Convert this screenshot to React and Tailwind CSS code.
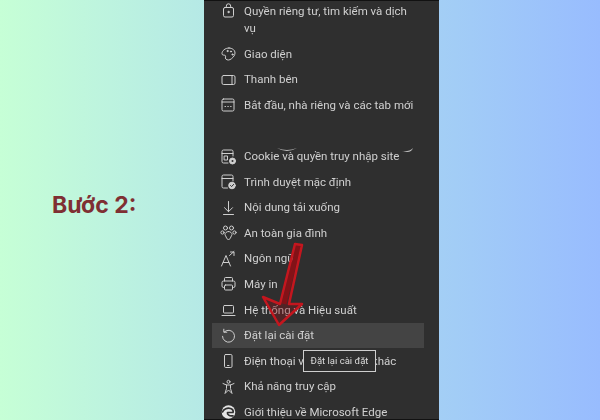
const Ic = ({ children }) => (
  <svg width="18" height="18" viewBox="0 0 18 18" fill="none" stroke="#cfcfcf" strokeWidth="1" strokeLinecap="round" strokeLinejoin="round">
    {children}
  </svg>
);

const items = [
  {
    label: "Quyền riêng tư, tìm kiếm và dịch vụ",
    icon: (
      <>
        <rect x="4.500" y="5.500" width="10" height="9.500" rx="1.500" />
        <path d="M7.300 5.500V4a2.200 2.200 0 0 1 4.400 0v1.500" />
        <circle cx="9.500" cy="10" r="0.700" fill="#cfcfcf" />
      </>
    ),
  },
  {
    label: "Giao diện",
    icon: (
      <>
        <path d="M10 3C6 3 3 5.800 3 8.600c0 2 2.300 1.200 3.200 1.800 1.200.8-.6 2.400.6 3.600 1.500 1.500 3.800 1.200 5.600-.2C14.600 12 16 10 16 8c0-2.800-2.500-5-6-5z" />
        <circle cx="8.500" cy="6" r="0.600" fill="#cfcfcf" />
        <circle cx="12" cy="6.500" r="0.600" fill="#cfcfcf" />
        <circle cx="13.500" cy="9.500" r="0.600" fill="#cfcfcf" />
      </>
    ),
  },
  {
    label: "Thanh bên",
    icon: (
      <>
        <rect x="3" y="4.500" width="13" height="9" rx="1.500" />
        <path d="M13 4.500v9" />
      </>
    ),
  },
  {
    label: "Bắt đầu, nhà riêng và các tab mới",
    gapAfter: true,
    icon: (
      <>
        <rect x="3" y="3" width="12" height="12" rx="1.500" />
        <path d="M3 6h12M6 10.500h.5M8.800 10.500h.5M11.600 10.500h.5" />
      </>
    ),
  },
  {
    label: "Cookie và quyền truy nhập site",
    icon: (
      <>
        <path d="M9 15H4.500A1.500 1.500 0 0 1 3 13.500v-10A1.500 1.500 0 0 1 4.500 2h8A1.500 1.500 0 0 1 14 3.500V8" />
        <path d="M3 5.500h11" />
        <rect x="5.500" y="8" width="3" height="4" />
        <circle cx="13.500" cy="13" r="3" fill="#cfcfcf" />
        <circle cx="13.500" cy="13" r="1" fill="#2f2f2f" stroke="none" />
      </>
    ),
  },
  {
    label: "Trình duyệt mặc định",
    icon: (
      <>
        <path d="M8.500 15H4.500A1.500 1.500 0 0 1 3 13.500v-10A1.500 1.500 0 0 1 4.500 2h8A1.500 1.500 0 0 1 14 3.500V8" />
        <path d="M3 5.500h11" />
        <circle cx="13" cy="12.500" r="3.300" fill="#cfcfcf" />
        <path d="M11.500 12.500l1.100 1.100 2-2.200" stroke="#2f2f2f" />
      </>
    ),
  },
  {
    label: "Nội dung tải xuống",
    icon: <path d="M9.500 2.500v10M5.500 8.700l4 4 4-4M4.500 15.500h10" />,
  },
  {
    label: "An toàn gia đình",
    icon: (
      <>
        <circle cx="6.500" cy="4" r="2" />
        <circle cx="12.500" cy="4" r="2" />
        <circle cx="3.500" cy="8.500" r="1.600" />
        <circle cx="15.500" cy="8.500" r="1.600" />
        <path d="M9.500 7.500c-2 0-3.500 1.500-3.500 3 0 1.200 1 1.500 1.200 2.500.2 1.300 1.200 2.500 2.300 2.500s2.100-1.200 2.300-2.500c.2-1 1.200-1.300 1.200-2.500 0-1.500-1.500-3-3.500-3z" />
      </>
    ),
  },
  {
    label: "Ngôn ngữ",
    icon: (
      <>
        <path d="M2.500 16 7 5.500 11.500 16M4.200 12.500h5.600" />
        <path d="M10.500 5.500 15 1.500M11.500 2H15v3.500" />
      </>
    ),
  },
  {
    label: "Máy in",
    icon: (
      <>
        <path d="M5.500 6V3.500a1 1 0 0 1 1-1h6a1 1 0 0 1 1 1V6" />
        <path d="M5.500 12.500H4.500A1.500 1.500 0 0 1 3 11V7.500A1.500 1.500 0 0 1 4.500 6h10A1.500 1.500 0 0 1 16 7.500V11a1.500 1.500 0 0 1-1.500 1.500h-1" />
        <rect x="5.500" y="10" width="8" height="5" rx="1" />
      </>
    ),
  },
  {
    label: "Hệ thống và Hiệu suất",
    icon: (
      <>
        <rect x="4.500" y="4.500" width="10" height="7.500" rx="1" />
        <path d="M3 14.500h13" />
      </>
    ),
  },
  {
    label: "Đặt lại cài đặt",
    active: true,
    icon: (
      <>
        <path d="M5.200 5A6 6 0 1 1 3.500 9.300" />
        <path d="M4.800 2.200v3h3" />
      </>
    ),
  },
  {
    label: "Điện thoại và các thiết bị khác",
    icon: (
      <>
        <rect x="5.500" y="2.500" width="7.500" height="13" rx="1.200" />
        <path d="M8.500 13.500h1.500" />
      </>
    ),
  },
  {
    label: "Khả năng truy cập",
    icon: (
      <>
        <circle cx="9.500" cy="3.800" r="1.500" />
        <path d="M4 5.500 7.500 7h4L15 5.500M7.500 7v3.500L6 15.500l3.500-3.500 3.500 3.500-1.500-5V7" />
      </>
    ),
  },
  {
    label: "Giới thiệu về Microsoft Edge",
    icon: (
      <>
        <circle cx="9.500" cy="9" r="6.800" fill="#e4e4e4" stroke="none" />
        <path d="M3.500 9c1-3 5-4.500 8-3.500 2 .7 3 2.500 2.500 4H8.500c-.5 2 2 4 5.500 3.300" stroke="#2f2f2f" strokeWidth="1.700" />
      </>
    ),
  },
];

function Row({ item }) {
  return (
    <div
      className={`flex items-start gap-[7px] pl-[7px] pr-[9px] py-[4.3px] ${
        item.active ? "bg-[#444444]" : ""
      } ${item.gapAfter ? "mb-[25.700px]" : ""}`}
    >
      <span className="shrink-0 w-[18px] h-[17px] flex items-center justify-center">
        <Ic>{item.icon}</Ic>
      </span>
      <span className="text-[11.500px] leading-[17px] text-[#d0d0d0]">{item.label}</span>
    </div>
  );
}

export default function App() {
  return (
    <div
      className="w-[600px] h-[420px] overflow-hidden flex bg-gradient-to-r from-[#c6ffd6] to-[#98bcfe]"
      style={{ fontFamily: 'Roboto, "Noto Sans", sans-serif' }}
    >
      <div className="w-[204px] h-full flex items-center pl-[52px] pb-[10px]">
        <h1 className="text-[23px] font-bold text-[#7f2f33]" style={{ fontFamily: 'Inter, "Noto Sans", sans-serif' }}>
          Bước 2:
        </h1>
      </div>

      <div className="relative w-[235px] h-full bg-[#2f2f2f] border-y border-[#111111] overflow-hidden pl-[8px] pr-[15px] blur-[0.4px]">
        <div className="mt-[-2.350px]">
          {items.map((item) => (
            <Row key={item.label} item={item} />
          ))}
        </div>

        {/* tooltip */}
        <div className="absolute left-[99px] top-[349px] h-[22px] w-[73px] flex items-center justify-center bg-[#2f2f2f] border border-[#cfcfcf] text-[9.500px] text-[#dddddd] whitespace-nowrap">
          Đặt lại cài đặt
        </div>

        {/* red arrow over the list, hollow so the text shows through */}
        <svg className="absolute left-0 top-0" width="235" height="420" viewBox="0 0 235 420" fill="none">
          <path d="M94.500 244 80 303" stroke="#7d1318" strokeWidth="5" />
          <path d="M91 243 98 244 85 303 98 303 75 324 59 296 76 303Z" fill="#8f1016" fillOpacity="0.35" stroke="#c4161e" strokeWidth="2.500" strokeLinejoin="round" />
          <path d="M73 147q10 4 20 0q-10 6-20 0zM198 150q7 1 11-3q-2 6-11 3z" fill="#bdbdbd" />
        </svg>
      </div>
    </div>
  );
}
